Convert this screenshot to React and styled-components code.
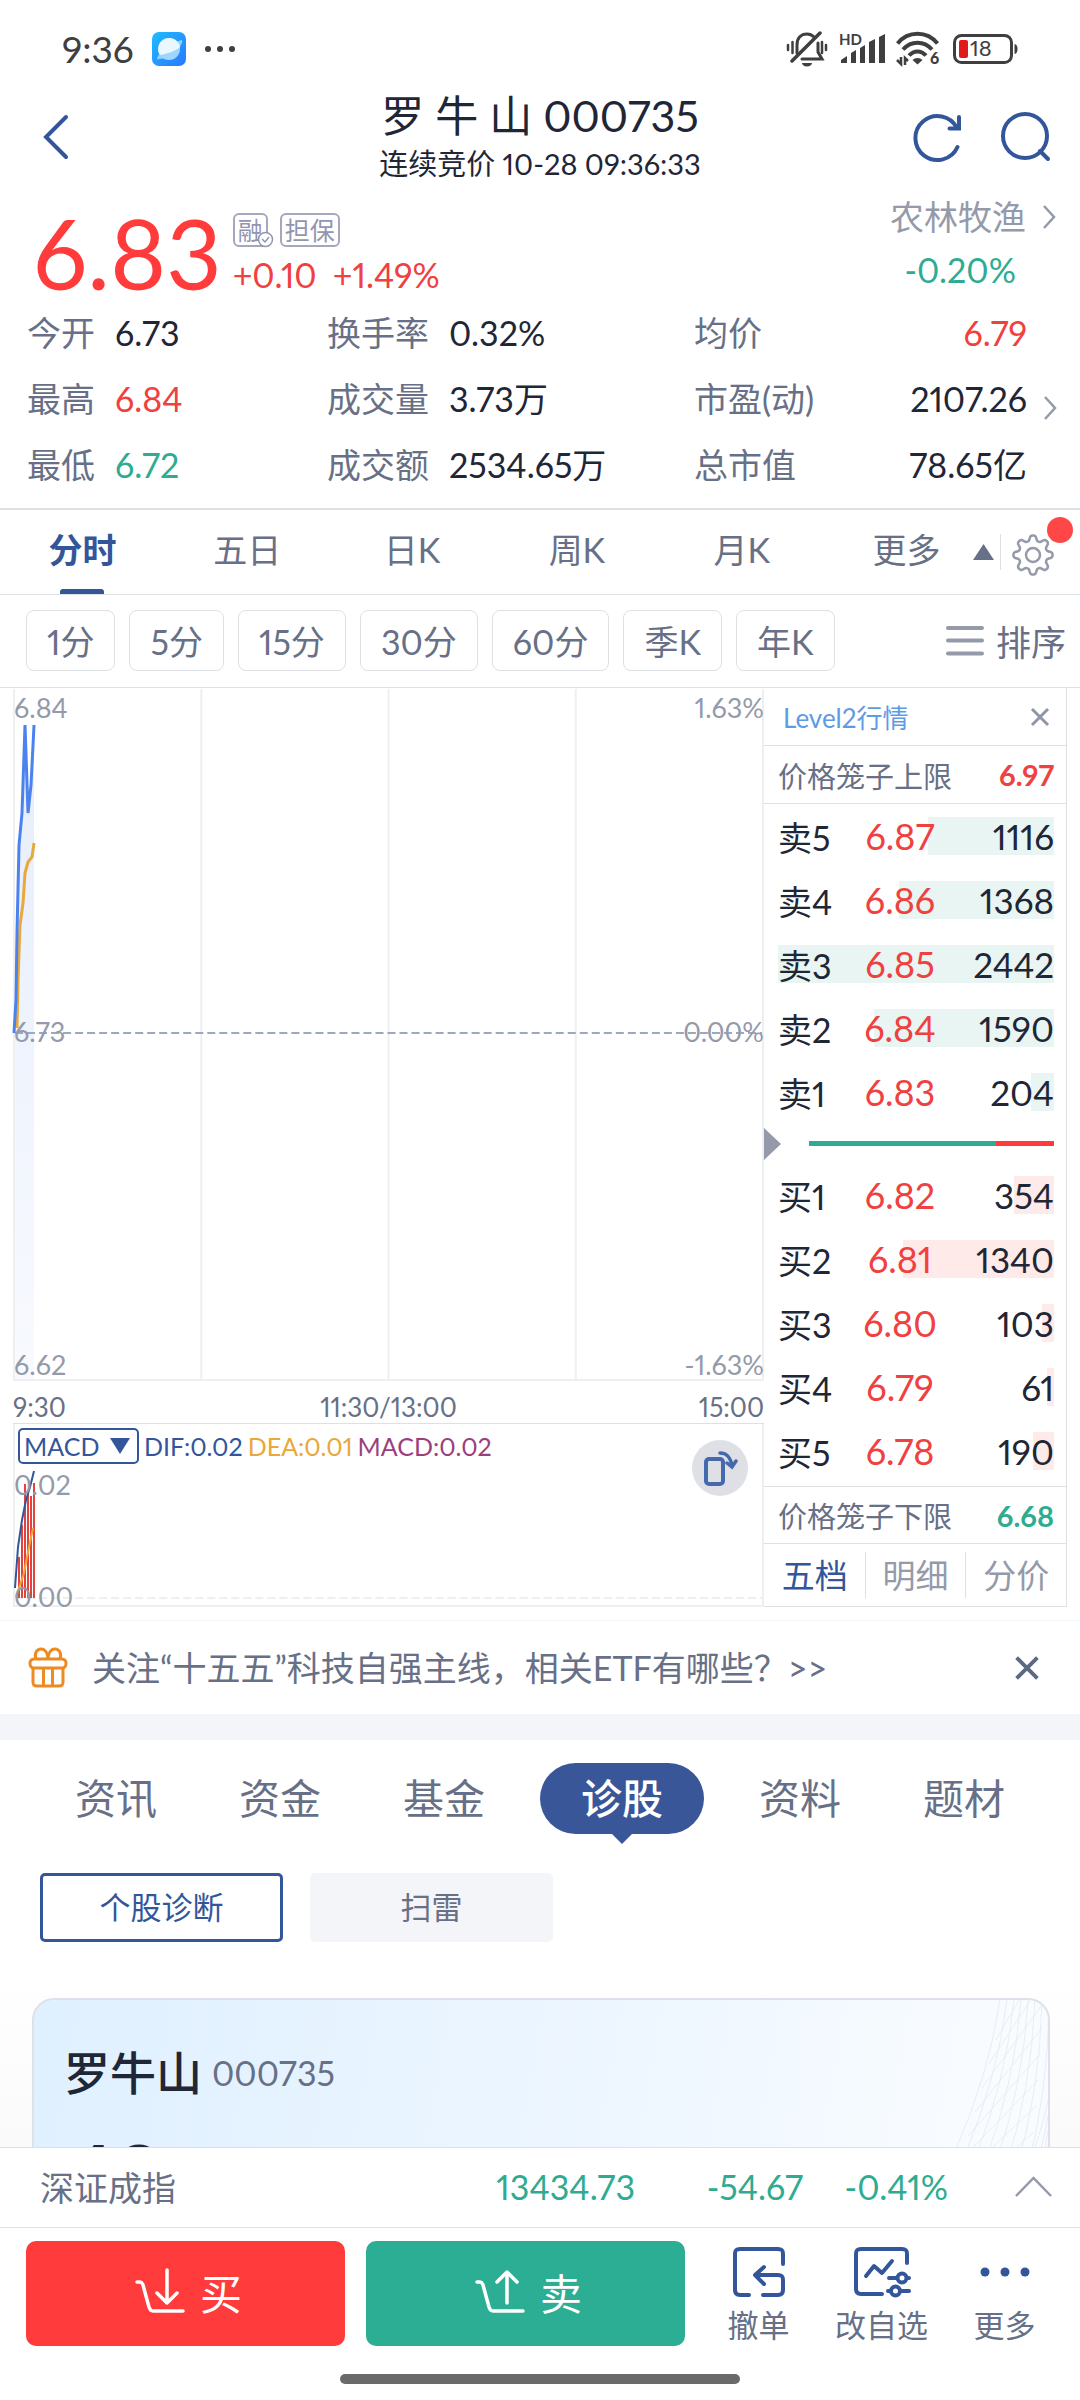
import React, { useState } from 'react';
import styled, { createGlobalStyle, ThemeProvider } from 'styled-components';

const theme = {
  TEXT: '#1f2636',
  LABEL: '#677086',
  MUTED: '#949aaa',
  BLUE: '#33569b',
  RED: '#f04040',
  RED_BG: '#ff3b3b',
  GREEN: '#2fab91',
  ORANGE: '#e9a83a',
  PURPLE: '#9b3f7f',
  LINE: '#dfe0e4',
  GRID: '#eeeff1',
  PANEL: '#f3f5f8',
};

const GlobalStyle = createGlobalStyle`
  * {
    box-sizing: border-box;
  }
  body {
    margin: 0;
    background: #fff;
    color: ${theme.TEXT};
    font-family: Lato, "Noto Sans CJK SC", sans-serif;
    font-size: 34px;
    font-variant-numeric: proportional-nums;
  }
  button, select {
    padding: 0;
    border: none;
    background: none;
    color: inherit;
    font: inherit;
    cursor: pointer;
  }
  dl, dt, dd, h1, h2, p {
    margin: 0;
    font-weight: 400;
  }
  svg {
    display: block;
    flex: none;
  }
`;

const toneColor = ({ theme: t, $tone }) => ({ up: t.RED, down: t.GREEN }[$tone] || t.TEXT);

/* ---------- layout ---------- */

const Screen = styled.div`
  display: flex;
  flex-direction: column;
  height: 100vh;
  overflow: hidden;
`;
const Content = styled.main`
  flex: 1;
  min-height: 0;
  overflow: hidden;
  background: linear-gradient(#fff 92%, #fafafb);
`;

/* ---------- status bar ---------- */

const StatusBar = styled.div`
  display: flex;
  justify-content: space-between;
  align-items: center;
  height: 68px;
  padding: 30px 61px 0 62px;
  color: #3f3f3f;
  line-height: 36px;
  font-size: 37px;
`;
const StatusGroup = styled.div`
  display: flex;
  align-items: center;
  gap: ${({ $gap }) => $gap}px;
`;

/* ---------- header ---------- */

const Header = styled.header`
  display: grid;
  grid-template-columns: 1fr auto 1fr;
  align-items: center;
  padding: 24px 28px 0;
`;
const HeaderActions = styled.div`
  display: flex;
  justify-content: flex-end;
  gap: 36px;
`;
const IconButton = styled.button`
  display: flex;
  align-items: center;
  justify-content: center;
`;
const BackButton = styled(IconButton)`
  justify-self: start;
  padding: 0 14px;
`;
const Titles = styled.div`
  text-align: center;
`;
const Title = styled.h1`
  font-size: 43px;
  line-height: 48px;
`;
const Subtitle = styled.p`
  margin-top: 6px;
  font-size: 29px;
  line-height: 36px;
`;

/* ---------- quote ---------- */

const Quote = styled.section`
  display: flex;
  justify-content: space-between;
  align-items: flex-start;
  height: 118px;
  padding: 15px 24px 0 33px;
`;
const QuoteMain = styled.div`
  display: flex;
  gap: 11px;
  padding-top: 16px;
`;
const Price = styled.div`
  color: ${({ theme }) => theme.RED_BG};
  font-size: 96px;
  line-height: 80px;
`;
const Badges = styled.div`
  display: flex;
  gap: 12px;
`;
const Badge = styled.span`
  position: relative;
  padding: 0 3px;
  border: 2px solid #a5a7bd;
  border-radius: 6px;
  color: #9295b0;
  font-size: 25px;
  line-height: 30px;
`;
const BadgeCheck = styled.svg`
  position: absolute;
  right: -8px;
  bottom: -3px;
`;
const Change = styled.div`
  display: flex;
  gap: 16px;
  margin-top: 8px;
  color: ${toneColor};
  line-height: 40px;
`;
const Sector = styled.a`
  display: grid;
  grid-template-columns: auto auto;
  align-items: center;
  column-gap: 16px;
  row-gap: 13px;
  color: ${({ theme }) => theme.MUTED};
  line-height: 40px;
  text-decoration: none;
`;
const SectorChange = styled.span`
  padding-right: 10px;
  color: ${({ theme }) => theme.GREEN};
  text-align: right;
`;

/* ---------- stats ---------- */

const Stats = styled.section`
  display: flex;
  align-items: center;
  padding-bottom: 10px;
  border-bottom: 2px solid ${({ theme }) => theme.LINE};
`;
const StatList = styled.dl`
  display: grid;
  flex: 1;
  grid-template-columns: 300fr 367fr 333fr;
  padding-left: 27px;
  line-height: 66px;
`;
const Stat = styled.div`
  display: flex;
  gap: 20px;
  justify-content: ${({ $spread }) => ($spread ? 'space-between' : 'flex-start')};
`;
const StatLabel = styled.dt`
  color: ${({ theme }) => theme.LABEL};
`;
const StatValue = styled.dd`
  color: ${toneColor};
`;
const StatsMore = styled(IconButton)`
  width: 53px;
  padding: 18px 8px 0 0;
`;

/* ---------- period tabs ---------- */

const PeriodTabs = styled.nav`
  display: flex;
  align-items: center;
  border-bottom: 1px solid ${({ theme }) => theme.LINE};
`;
const PeriodTab = styled.button`
  display: flex;
  flex: 1;
  flex-direction: column;
  align-items: center;
  height: 84px;
  color: ${({ theme, $active }) => ($active ? theme.BLUE : theme.LABEL)};
  font-weight: ${({ $active }) => ($active ? 700 : 400)};
  line-height: 79px;
  &::after {
    content: '';
    width: 44px;
    height: 5px;
    border-radius: 3px 3px 0 0;
    background: ${({ theme, $active }) => ($active ? theme.BLUE : 'transparent')};
  }
`;
const PeriodTools = styled.div`
  display: flex;
  align-items: center;
  gap: 6px;
  width: 107px;
  margin-left: -16px;
  padding-right: 24px;
`;
const ToolDivider = styled.span`
  width: 1px;
  height: 36px;
  background: ${({ theme }) => theme.LINE};
`;
const SettingsButton = styled(IconButton)`
  position: relative;
  padding: 6px 0 0 4px;
`;
const Dot = styled.span`
  position: absolute;
  top: -10px;
  right: -18px;
  width: 26px;
  height: 26px;
  border-radius: 50%;
  background: #ff4747;
`;

/* ---------- minute chips ---------- */

const Chips = styled.div`
  display: flex;
  align-items: center;
  gap: 14px;
  padding: 15px 14px 16px 26px;
  border-bottom: 1px solid ${({ theme }) => theme.LINE};
`;
const Chip = styled.button`
  height: 61px;
  padding: 0 20px;
  border: 1px solid ${({ theme }) => theme.LINE};
  border-radius: 8px;
  color: ${({ theme }) => theme.LABEL};
`;
const SortButton = styled(IconButton)`
  gap: 12px;
  margin-left: auto;
  color: ${({ theme }) => theme.LABEL};
  font-size: 35px;
`;

/* ---------- chart ---------- */

const Market = styled.section`
  display: flex;
  padding: 0 13px 13px 13px;
  border-bottom: 1px solid ${({ theme }) => theme.PANEL};
`;
const ChartColumn = styled.div`
  flex: 1;
  min-width: 0;
  padding-top: 1px;
`;
const Plot = styled.div`
  position: relative;
  height: ${({ $height }) => $height}px;
  border: solid ${({ theme }) => theme.GRID};
  border-width: 0 2px 2px 2px;
`;
const PlotSvg = styled.svg`
  width: 100%;
  height: 100%;
  overflow: visible;
`;
const AxisLabel = styled.span`
  position: absolute;
  top: ${({ $top }) => $top}px;
  left: ${({ $right }) => ($right ? 'auto' : '-1px')};
  right: ${({ $right }) => ($right ? '-2px' : 'auto')};
  color: ${({ theme }) => theme.MUTED};
  font-size: 27px;
  line-height: 32px;
`;
const TimeAxis = styled.div`
  display: grid;
  grid-template-columns: 1fr auto 1fr;
  padding: 10px 0 0;
  border-bottom: 1px solid ${({ theme }) => theme.LINE};
  color: ${({ theme }) => theme.LABEL};
  font-size: 26px;
  line-height: 32px;
  span:last-child {
    text-align: right;
  }
`;
const IndicatorBar = styled.div`
  position: absolute;
  top: 4px;
  left: 3px;
  display: flex;
  align-items: center;
  gap: 5px;
  font-size: 25px;
  line-height: 32px;
`;
const IndicatorPicker = styled.label`
  position: relative;
  display: flex;
  align-items: center;
  svg {
    position: absolute;
    right: 9px;
    pointer-events: none;
  }
`;
const IndicatorSelect = styled.select`
  width: 121px;
  height: 36px;
  padding-left: 4px;
  border: 2px solid ${({ theme }) => theme.BLUE};
  border-radius: 5px;
  color: ${({ theme }) => theme.BLUE};
  line-height: 32px;
  appearance: none;
`;
const IndicatorValue = styled.span`
  color: ${({ theme, $color }) => theme[$color]};
`;
const RotateButton = styled(IconButton)`
  position: absolute;
  top: 16px;
  right: 14px;
  width: 56px;
  height: 56px;
  border-radius: 50%;
  background: #dfe0e6;
`;

/* ---------- order book ---------- */

const Book = styled.aside`
  flex: 0 0 303px;
  border: solid ${({ theme }) => theme.LINE};
  border-width: 0 1px 1px 0;
`;
const BookHeader = styled.div`
  display: flex;
  justify-content: space-between;
  align-items: center;
  height: 58px;
  padding: 0 16px 0 19px;
  border-bottom: 1px solid ${({ theme }) => theme.LINE};
  color: #5e9be6;
  font-size: 26px;
`;
const CageRow = styled.div`
  display: flex;
  justify-content: space-between;
  align-items: center;
  height: 58px;
  padding: 0 12px 0 14px;
  border: solid ${({ theme }) => theme.LINE};
  border-width: ${({ $bottom }) => ($bottom ? '1px' : '0')} 0 1px 0;
  color: ${({ theme }) => theme.LABEL};
  font-size: 29px;
`;
const CageValue = styled.strong`
  color: ${toneColor};
`;
const Levels = styled.table`
  display: block;
  padding: 0 12px ${({ $side }) => ($side === 'buy' ? 3 : 0)}px 14px;
  border-spacing: 0;
  tbody {
    display: block;
  }
`;
const Level = styled.tr`
  position: relative;
  display: grid;
  grid-template-columns: 70px 104px 1fr;
  align-items: center;
  height: 64px;
`;
const LevelName = styled.th`
  position: relative;
  padding: 0;
  font-weight: 400;
  text-align: left;
`;
const LevelPrice = styled.td`
  position: relative;
  padding: 0;
  color: ${({ theme }) => theme.RED};
  font-size: 36px;
  text-align: center;
`;
const LevelVolume = styled.td`
  position: relative;
  padding: 0;
  font-size: 35px;
  text-align: right;
`;
const BarCell = styled.td`
  position: absolute;
  inset: 0;
  padding: 0;
`;
const VolumeBar = styled.span`
  position: absolute;
  top: 13px;
  right: 0;
  height: 38px;
  background: ${({ $side }) => ($side === 'sell' ? '#e8f5f3' : '#ffeaea')};
`;
const Balance = styled.div`
  display: flex;
  align-items: center;
  gap: 28px;
  height: 39px;
  padding-right: 12px;
`;
const BalanceTrack = styled.div`
  flex: 1;
  height: 5px;
  background: ${({ theme }) => theme.RED_BG};
`;
const BalanceSell = styled.div`
  height: 100%;
  background: ${({ theme }) => theme.GREEN};
`;
const BookTabs = styled.div`
  display: grid;
  grid-template-columns: repeat(3, 1fr);
  padding: 8px 0 7px;
`;
const BookTab = styled.button`
  height: 46px;
  border-left: 1px solid ${({ theme, $first }) => ($first ? 'transparent' : theme.LINE)};
  color: ${({ theme, $active }) => ($active ? theme.BLUE : theme.MUTED)};
  font-size: 33px;
  line-height: 44px;
`;

/* ---------- banner and sections ---------- */

const Banner = styled.div`
  display: flex;
  align-items: center;
  height: 93px;
  padding: 0 40px 0 28px;
`;
const BannerLink = styled.a`
  flex: 1;
  margin-left: 24px;
  color: ${({ theme }) => theme.LABEL};
  line-height: 40px;
  text-decoration: none;
`;
const Band = styled.div`
  height: 26px;
  background: ${({ theme }) => theme.PANEL};
`;
const SectionTabs = styled.nav`
  display: flex;
  justify-content: center;
  padding: 23px 0 39px;
`;
const SectionTab = styled.button`
  position: relative;
  height: 71px;
  margin: 0 ${({ $active }) => ($active ? 14 : 0)}px;
  padding: 0 41px 6px;
  border-radius: 36px;
  background: ${({ $active }) => ($active ? '#395699' : 'transparent')};
  color: ${({ theme, $active }) => ($active ? '#fff' : theme.LABEL)};
  font-size: 41px;
  font-weight: ${({ $active }) => ($active ? 500 : 400)};
  &::after {
    content: '';
    display: ${({ $active }) => ($active ? 'block' : 'none')};
    position: absolute;
    top: 70px;
    left: calc(50% - 11px);
    border: solid transparent;
    border-width: 11px 11px 0;
    border-top-color: #395699;
  }
`;
const SubTabs = styled.div`
  display: flex;
  gap: 27px;
  padding: 0 40px;
`;
const SubTab = styled.button`
  width: 243px;
  height: 69px;
  padding-bottom: 4px;
  border: 3px solid ${({ theme, $active }) => ($active ? theme.BLUE : theme.PANEL)};
  border-radius: 5px;
  background: ${({ theme, $active }) => ($active ? '#fff' : theme.PANEL)};
  color: ${({ theme, $active }) => ($active ? theme.BLUE : theme.LABEL)};
  font-size: 31px;
`;
const Card = styled.article`
  position: relative;
  height: 400px;
  margin: 56px 30px 0 32px;
  padding: 43px 30px;
  border: 2px solid #dde2ea;
  border-radius: 22px;
  background: linear-gradient(100deg, #dff0ff, #eff7ff 60%, #f9fcff 90%);
  overflow: hidden;
`;
const CardTitle = styled.h2`
  display: flex;
  align-items: center;
  gap: 10px;
  font-size: 46px;
  font-weight: 500;
  line-height: 60px;
`;
const CardCode = styled.span`
  color: ${({ theme }) => theme.LABEL};
  font-size: 34px;
  font-weight: 400;
`;
const Score = styled.p`
  margin-top: 29px;
  font-size: 84px;
  font-weight: 700;
  line-height: 84px;
`;
const CardMesh = styled.svg`
  position: absolute;
  top: 0;
  right: 0;
`;

/* ---------- footer ---------- */

const IndexBar = styled.div`
  display: grid;
  grid-template-columns: 1fr auto 168px 145px auto;
  align-items: center;
  height: 81px;
  padding: 0 28px 2px 40px;
  border: solid ${({ theme }) => theme.LINE};
  border-width: 1px 0;
`;
const IndexName = styled.span`
  color: ${({ theme }) => theme.LABEL};
`;
const IndexValue = styled.span`
  color: ${({ theme }) => theme.GREEN};
  text-align: right;
`;
const IndexToggle = styled(IconButton)`
  margin-left: 67px;
`;
const Actions = styled.div`
  display: flex;
  padding: 13px 14px 28px 26px;
`;
const TradeButtons = styled.div`
  display: flex;
  flex: 1;
  gap: 21px;
  margin-right: 12px;
`;
const TradeButton = styled(IconButton)`
  flex: 1;
  gap: 15px;
  height: 105px;
  padding: 0 0 5px 6px;
  border-radius: 10px;
  background: ${({ theme, $side }) => ($side === 'buy' ? theme.RED_BG : '#2cae94')};
  color: #fff;
  font-size: 42px;
`;
const ToolButton = styled.button`
  display: flex;
  flex-direction: column;
  align-items: center;
  gap: 7px;
  width: 123px;
  padding-top: 5px;
  color: ${({ theme }) => theme.LABEL};
  font-size: 31px;
  line-height: 40px;
`;
const HomeBar = styled.div`
  width: 37%;
  height: 10px;
  margin: 0 auto 16px;
  border-radius: 5px;
  background: #6a6a6a;
`;

/* ---------- icons ---------- */

const Chevron = () => (
  <svg width="14" height="24" viewBox="0 0 14 24" fill="none" stroke="#949aaa" strokeWidth="2.5">
    <path d="M2 1l10 11L2 23" />
  </svg>
);

const PlanetIcon = () => (
  <svg width="34" height="34" viewBox="0 0 34 34">
    <defs>
      <linearGradient id="planet" x1="0" y1="0" x2="1" y2="1">
        <stop offset="0" stopColor="#1fbcff" />
        <stop offset="1" stopColor="#2b78ff" />
      </linearGradient>
    </defs>
    <rect width="34" height="34" rx="7" fill="url(#planet)" />
    <path d="M5 27c0-3 4-7 10-11 6-4 12-8 15-8 1 3-3 9-9 13S8 28 5 27z" fill="#8fd0ff" />
    <circle cx="17" cy="17" r="11" fill="#9fd6ff" />
    <path d="M8 23A11 11 0 1 1 28 15C24 19 14 22 8 23z" fill="#e9f7ff" />
  </svg>
);

const MuteIcon = () => (
  <svg width="42" height="36" viewBox="0 0 42 36" fill="none" stroke="#3f3f3f" strokeWidth="3" strokeLinecap="round">
    <path d="M11 22v-8c0-7 4-11 10-11 3 0 5 1 7 3M32 12v9l4 7H16" />
    <path d="M6 30L34 2" strokeWidth="3.5" />
    <path d="M16 32a5 3.5 0 0 0 10 0z" fill="#3f3f3f" stroke="none" />
    <path d="M2 14v5M6.5 11v11M36 11v11M40 14v5" strokeWidth="2.5" />
  </svg>
);

const SignalIcon = () => (
  <svg width="46" height="34" viewBox="0 0 46 34" fill="#3f3f3f">
    <text x="0" y="13" fontSize="15" fontWeight="700" fontFamily="Lato, sans-serif">HD</text>
    <path d="M2 31v-3l6-4v7zM12 31V21l5-3v13zM21 31V16l5-3v18zM30 31V10l6-3v24zM40 31V5l6-3v29z" />
  </svg>
);

const WifiIcon = () => (
  <svg width="46" height="36" viewBox="0 0 46 36" fill="none" stroke="#3f3f3f" strokeWidth="4">
    <path d="M1.5 12.5C12 -0.5 31 -0.5 41.5 12.5M7 18.5c8-9 21-9 29 0M13 24.5c5-5.5 12-5.500 17 0" />
    <path d="M16.5 29a7 7 0 0 1 10 0l-5 4.5z" fill="#3f3f3f" stroke="none" />
    <path d="M5 26v7l-4-4M9 34v-7l3 3" strokeWidth="2.5" />
    <text x="34" y="33" fontSize="16" fontWeight="900" fill="#3f3f3f" stroke="none" fontFamily="Lato, sans-serif">6</text>
  </svg>
);

const BatteryIcon = () => (
  <svg width="66" height="30" viewBox="0 0 66 30">
    <rect x="1.5" y="1.5" width="57" height="27" rx="7" fill="none" stroke="#3f3f3f" strokeWidth="3" />
    <rect x="6" y="6" width="9" height="18" rx="2" fill="#e01b1b" />
    <path d="M61.5 10c4 0 4 10 0 10z" fill="#3f3f3f" />
    <text x="17" y="22" fontSize="22" fill="#3f3f3f" fontFamily="Lato, sans-serif">18</text>
  </svg>
);

const BackIcon = () => (
  <svg width="28" height="46" viewBox="0 0 28 46" fill="none" stroke="#33569b" strokeWidth="4" strokeLinecap="round">
    <path d="M24 3L4 23l20 20" />
  </svg>
);

const RefreshIcon = () => (
  <svg width="52" height="52" viewBox="0 0 52 52" fill="none" stroke="#33569b" strokeWidth="4" strokeLinecap="round">
    <path d="M45.5 36A22 22 0 1 1 45 17" />
    <path d="M47 6v11.5H37.5" />
  </svg>
);

const SearchIcon = () => (
  <svg width="52" height="52" viewBox="0 0 52 52" fill="none" stroke="#33569b" strokeWidth="4" strokeLinecap="round">
    <circle cx="25" cy="25" r="22" />
    <path d="M40 40l8 8" />
  </svg>
);

const gearPoints = Array.from({ length: 128 }, (_, i) => {
  const angle = (i / 128) * Math.PI * 2;
  const radius = 17 + 2.8 * Math.tanh(1.6 * Math.cos(angle * 8));
  return `${(22 + radius * Math.sin(angle)).toFixed(2)},${(22 - radius * Math.cos(angle)).toFixed(2)}`;
}).join(' ');

const GearIcon = () => (
  <svg width="44" height="44" viewBox="0 0 44 44" fill="none" stroke="#949aaa" strokeWidth="2.5" strokeLinejoin="round">
    <polygon points={gearPoints} />
    <circle cx="22" cy="22" r="7" />
  </svg>
);

const CrossIcon = ({ size, width, color }) => (
  <svg width={size} height={size} viewBox="0 0 20 20" fill="none" stroke={color} strokeWidth={width}>
    <path d="M2 2l16 16M18 2L2 18" />
  </svg>
);

const GiftIcon = () => (
  <svg width="40" height="42" viewBox="0 0 40 42" fill="none" stroke="#ee8a22" strokeWidth="3">
    <rect x="2" y="12" width="36" height="9" rx="4" />
    <path d="M5 21v14c0 3 1 4 4 4h22c3 0 4-1 4-4V21M15.5 22v16M24.5 22v16" />
    <path d="M8 12C6 6 9 2 13 2c4 0 7 4 7 10 0-6 3-10 7-10 4 0 7 4 5 10" />
  </svg>
);

const RotateIcon = () => (
  <svg width="36" height="36" viewBox="0 0 36 36" fill="none" stroke="#4569ad" strokeWidth="4" strokeLinecap="round">
    <rect x="4" y="9" width="17" height="25" rx="3" />
    <path d="M18 3c7 0 10 4 12 12M25 13l5 4 4-6" strokeWidth="3.5" />
  </svg>
);

const TradeIcon = ({ up }) => (
  <svg width="50" height="46" viewBox="0 0 50 46" fill="none" stroke="#fff" strokeWidth="3.5" strokeLinecap="round" strokeLinejoin="round">
    <path d="M2 14h3c2 0 2 1 3 3l6 22c1 3 2 4 4 4h30" />
    {up ? <path d="M32 35V4M22 14L32 4l10 10" /> : <path d="M32 2v32M22 25l10 10 10-10" />}
  </svg>
);

const CancelIcon = () => (
  <svg width="54" height="52" viewBox="0 0 54 52" fill="none" stroke="#33569b" strokeWidth="4" strokeLinecap="round" strokeLinejoin="round">
    <path d="M17 49H8c-4 0-5-2-5-5V8c0-4 1-5 5-5h38c4 0 5 1 5 5v10" />
    <path d="M31 49h15c4 0 5-2 5-5V34c0-4-1-5-5-5H24M32 21l-9 8 9 9" />
  </svg>
);

const EditIcon = () => (
  <svg width="58" height="52" viewBox="0 0 58 52" fill="none" stroke="#33569b" strokeWidth="4" strokeLinecap="round" strokeLinejoin="round">
    <path d="M29 48H8c-4 0-5-2-5-5V8c0-4 1-5 5-5h41c4 0 5 1 5 5v9" />
    <path d="M13 30l8-10 8 7 10-12" />
    <path d="M36 32h8M54 32h2M35 45h3M47 45h9" />
    <circle cx="49" cy="32" r="4.5" />
    <circle cx="42.5" cy="45" r="4.5" />
  </svg>
);

const MoreIcon = () => (
  <svg width="52" height="52" viewBox="0 0 52 52" fill="#33569b">
    <circle cx="6" cy="26" r="4.5" />
    <circle cx="26" cy="26" r="4.5" />
    <circle cx="46" cy="26" r="4.5" />
  </svg>
);

/* ---------- data ---------- */

const stats = [
  ['今开', '6.73'], ['换手率', '0.32%'], ['均价', '6.79', 'up'],
  ['最高', '6.84', 'up'], ['成交量', '3.73万'], ['市盈(动)', '2107.26'],
  ['最低', '6.72', 'down'], ['成交额', '2534.65万'], ['总市值', '78.65亿'],
];
const periods = ['分时', '五日', '日K', '周K', '月K', '更多'];
const minutes = ['1分', '5分', '15分', '30分', '60分', '季K', '年K'];
const sells = [['卖5', '6.87', 1116], ['卖4', '6.86', 1368], ['卖3', '6.85', 2442], ['卖2', '6.84', 1590], ['卖1', '6.83', 204]];
const buys = [['买1', '6.82', 354], ['买2', '6.81', 1340], ['买3', '6.80', 103], ['买4', '6.79', 61], ['买5', '6.78', 190]];
const maxVolume = 2442;
const sections = ['资讯', '资金', '基金', '诊股', '资料', '题材'];
const macdBars = [[4, 133], [7, 101], [10, 60], [13, 66], [16, 72], [19, 59]];

/* ---------- parts ---------- */

const PriceChart = () => (
  <Plot $height={692}>
    <PlotSvg viewBox="0 0 746 690" preserveAspectRatio="none">
      <defs>
        <linearGradient id="area" x1="0" y1="0" x2="0" y2="1">
          <stop offset="0" stopColor="#e6edfb" />
          <stop offset="1" stopColor="#f8faff" />
        </linearGradient>
      </defs>
      <path d="M186 0v690M373 0v690M560 0v690" stroke="#eeeff1" strokeWidth="2" />
      <path d="M0 344l2-33 1-67 2-88 3-32 3-88 3 88 3-28 2-60v654H0z" fill="url(#area)" />
      <path d="M0 344h746" stroke="#9aa8c4" strokeWidth="2" strokeDasharray="8 4" />
      <path d="M2 339l1-48 2-55 3-22 2-30 3-11 4-5 2-14" fill="none" stroke="#e9a83a" strokeWidth="3" />
      <path d="M-1 344l2-33 1-67 2-88 3-32 3-88 3 88 3-28 3-60" fill="none" stroke="#4c82ee" strokeWidth="3" />
    </PlotSvg>
    <AxisLabel $top={3}>6.84</AxisLabel>
    <AxisLabel $top={3} $right>1.63%</AxisLabel>
    <AxisLabel $top={327}>6.73</AxisLabel>
    <AxisLabel $top={327} $right>0.00%</AxisLabel>
    <AxisLabel $top={660}>6.62</AxisLabel>
    <AxisLabel $top={660} $right>-1.63%</AxisLabel>
  </Plot>
);

const MacdChart = () => (
  <Plot $height={183}>
    <PlotSvg viewBox="0 0 746 181" preserveAspectRatio="none">
      <path d="M0 174h746" stroke="#eeeff1" strokeWidth="2" strokeDasharray="8 4" />
      {macdBars.map(([x, y]) => (
        <path key={x} d={`M${x} ${y}V174`} stroke="#e2433f" strokeWidth="2" shapeRendering="crispEdges" />
      ))}
      <path d="M1 173l8-24 5-26 4-19" fill="none" stroke="#f3a72e" strokeWidth="2" />
      <path d="M0 164l3-41 4-27 4-20 4-13 4-16" fill="none" stroke="#33569b" strokeWidth="2" />
    </PlotSvg>
    <AxisLabel $top={45}>0.02</AxisLabel>
    <AxisLabel $top={157}>0.00</AxisLabel>
    <IndicatorBar>
      <IndicatorPicker>
        <IndicatorSelect aria-label="指标" defaultValue="MACD">
          <option value="MACD">MACD</option>
        </IndicatorSelect>
        <svg width="20" height="16" viewBox="0 0 20 16" fill="#33569b"><path d="M0 0h20L10 16z" /></svg>
      </IndicatorPicker>
      <IndicatorValue $color="BLUE">DIF:0.02</IndicatorValue>
      <IndicatorValue $color="ORANGE">DEA:0.01</IndicatorValue>
      <IndicatorValue $color="PURPLE">MACD:0.02</IndicatorValue>
    </IndicatorBar>
    <RotateButton aria-label="横屏"><RotateIcon /></RotateButton>
  </Plot>
);

const BookLevels = ({ levels, side }) => (
  <Levels $side={side}>
    <tbody>
      {levels.map(([name, price, volume]) => (
        <Level key={name}>
          <BarCell aria-hidden="true">
            <VolumeBar $side={side} style={{ width: `${(volume / maxVolume) * 100}%` }} />
          </BarCell>
          <LevelName scope="row">{name}</LevelName>
          <LevelPrice>{price}</LevelPrice>
          <LevelVolume>{volume}</LevelVolume>
        </Level>
      ))}
    </tbody>
  </Levels>
);

const OrderBook = () => {
  const [tab, setTab] = useState('五档');

  return (
    <Book>
      <BookHeader>
        <span>Level2行情</span>
        <IconButton aria-label="关闭"><CrossIcon size={20} width={3} color="#8f96a6" /></IconButton>
      </BookHeader>
      <CageRow>
        <span>价格笼子上限</span>
        <CageValue $tone="up">6.97</CageValue>
      </CageRow>
      <BookLevels levels={sells} side="sell" />
      <Balance>
        <svg width="17" height="32" viewBox="0 0 17 32" fill="#949aaa"><path d="M0 0l17 16L0 32z" /></svg>
        <BalanceTrack>
          <BalanceSell style={{ width: '76.4%' }} />
        </BalanceTrack>
      </Balance>
      <BookLevels levels={buys} side="buy" />
      <CageRow $bottom>
        <span>价格笼子下限</span>
        <CageValue $tone="down">6.68</CageValue>
      </CageRow>
      <BookTabs>
        {['五档', '明细', '分价'].map((name, i) => (
          <BookTab key={name} $first={i === 0} $active={tab === name} onClick={() => setTab(name)}>{name}</BookTab>
        ))}
      </BookTabs>
    </Book>
  );
};

const App = () => {
  const [period, setPeriod] = useState('分时');
  const [section, setSection] = useState('诊股');
  const [sub, setSub] = useState('个股诊断');

  return (
    <ThemeProvider theme={theme}>
      <GlobalStyle />
      <Screen>
        <Content>
          <StatusBar>
            <StatusGroup $gap={18}>
              <span>9:36</span>
              <PlanetIcon />
              <svg width="32" height="8" viewBox="0 0 32 8" fill="#3f3f3f">
                <circle cx="4" cy="4" r="3" />
                <circle cx="16" cy="4" r="3" />
                <circle cx="28" cy="4" r="3" />
              </svg>
            </StatusGroup>
            <StatusGroup $gap={11}>
              <MuteIcon />
              <SignalIcon />
              <WifiIcon />
              <BatteryIcon />
            </StatusGroup>
          </StatusBar>

          <Header>
            <BackButton aria-label="返回"><BackIcon /></BackButton>
            <Titles>
              <Title>罗 牛 山 000735</Title>
              <Subtitle>连续竞价 10-28 09:36:33</Subtitle>
            </Titles>
            <HeaderActions>
              <IconButton aria-label="刷新"><RefreshIcon /></IconButton>
              <IconButton aria-label="搜索"><SearchIcon /></IconButton>
            </HeaderActions>
          </Header>

          <Quote>
            <QuoteMain>
              <Price>6.83</Price>
              <div>
                <Badges>
                  <Badge>
                    融
                    <BadgeCheck width="17" height="17" viewBox="0 0 17 17" fill="#fff" stroke="#9295b0" strokeWidth="1.5">
                      <circle cx="8.5" cy="8.5" r="7" />
                      <path d="M5 8l3 3 4-5" />
                    </BadgeCheck>
                  </Badge>
                  <Badge>担保</Badge>
                </Badges>
                <Change $tone="up">
                  <span>+0.10</span>
                  <span>+1.49%</span>
                </Change>
              </div>
            </QuoteMain>
            <Sector href="#sector">
              <span>农林牧渔</span>
              <Chevron />
              <SectorChange>-0.20%</SectorChange>
            </Sector>
          </Quote>

          <Stats>
            <StatList>
              {stats.map(([label, value, tone], i) => (
                <Stat key={label} $spread={i % 3 === 2}>
                  <StatLabel>{label}</StatLabel>
                  <StatValue $tone={tone}>{value}</StatValue>
                </Stat>
              ))}
            </StatList>
            <StatsMore aria-label="更多指标"><Chevron /></StatsMore>
          </Stats>

          <PeriodTabs>
            {periods.map(name => (
              <PeriodTab key={name} $active={period === name} onClick={() => setPeriod(name)}>{name}</PeriodTab>
            ))}
            <PeriodTools>
              <svg width="21" height="16" viewBox="0 0 21 16" fill="#677086"><path d="M10.5 0L21 16H0z" /></svg>
              <ToolDivider />
              <SettingsButton aria-label="设置">
                <GearIcon />
                <Dot />
              </SettingsButton>
            </PeriodTools>
          </PeriodTabs>

          <Chips>
            {minutes.map(name => <Chip key={name}>{name}</Chip>)}
            <SortButton>
              <svg width="38" height="30" viewBox="0 0 38 30" stroke="#949aaa" strokeWidth="4" strokeLinecap="round">
                <path d="M2 2h34M2 14.5h34M2 27.5h34" />
              </svg>
              排序
            </SortButton>
          </Chips>

          <Market>
            <ChartColumn>
              <PriceChart />
              <TimeAxis>
                <span>9:30</span>
                <span>11:30/13:00</span>
                <span>15:00</span>
              </TimeAxis>
              <MacdChart />
            </ChartColumn>
            <OrderBook />
          </Market>

          <Banner>
            <GiftIcon />
            <BannerLink href="#etf">关注“十五五”科技自强主线，相关ETF有哪些？&gt;&gt;</BannerLink>
            <IconButton aria-label="关闭"><CrossIcon size={26} width={3} color="#5b6984" /></IconButton>
          </Banner>
          <Band />

          <SectionTabs>
            {sections.map(name => (
              <SectionTab key={name} $active={section === name} onClick={() => setSection(name)}>{name}</SectionTab>
            ))}
          </SectionTabs>
          <SubTabs>
            {['个股诊断', '扫雷'].map(name => (
              <SubTab key={name} $active={sub === name} onClick={() => setSub(name)}>{name}</SubTab>
            ))}
          </SubTabs>

          <Card>
            <CardMesh width="130" height="320" viewBox="0 0 130 320" fill="none" stroke="#e8edf2" strokeWidth="1">
              {[0, 1, 2, 3, 4, 5, 6, 7].map(i => (
                <path key={i} d={`M${82 + i * 7} 0Q${60 + i * 10} ${150 + i * 6} ${i * 14 - 60} 320`} />
              ))}
              {[0, 1, 2, 3, 4, 5, 6, 7, 8, 9, 10, 11].map(i => (
                <path key={`m${i}`} d={`M${78 - i * 7} ${40 + i * 24}L${130 - i * 2} ${-50 + i * 26}`} />
              ))}
              <path d="M130 100Q120 150 88 220M130 115Q124 160 94 220M130 130Q126 170 100 220M130 145L106 220" />
            </CardMesh>
            <CardTitle>
              罗牛山
              <CardCode>000735</CardCode>
            </CardTitle>
            <Score>48</Score>
          </Card>
        </Content>

        <footer>
          <IndexBar>
            <IndexName>深证成指</IndexName>
            <IndexValue>13434.73</IndexValue>
            <IndexValue>-54.67</IndexValue>
            <IndexValue>-0.41%</IndexValue>
            <IndexToggle aria-label="展开">
              <svg width="37" height="22" viewBox="0 0 37 22" fill="none" stroke="#949aaa" strokeWidth="2.5">
                <path d="M1 20L18.5 2 36 20" />
              </svg>
            </IndexToggle>
          </IndexBar>
          <Actions>
            <TradeButtons>
              <TradeButton $side="buy"><TradeIcon />买</TradeButton>
              <TradeButton $side="sell"><TradeIcon up />卖</TradeButton>
            </TradeButtons>
            <ToolButton><CancelIcon />撤单</ToolButton>
            <ToolButton><EditIcon />改自选</ToolButton>
            <ToolButton><MoreIcon />更多</ToolButton>
          </Actions>
          <HomeBar />
        </footer>
      </Screen>
    </ThemeProvider>
  );
};

export default App;
